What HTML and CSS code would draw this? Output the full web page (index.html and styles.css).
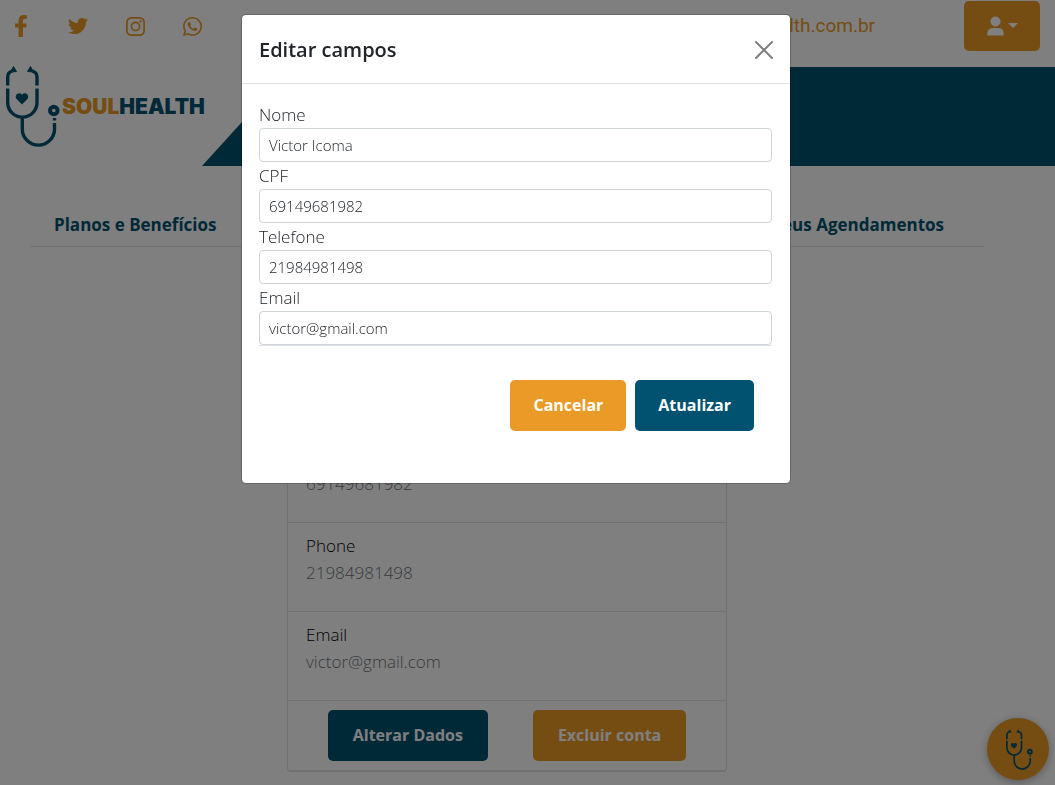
FILE: index.html
```html
<!DOCTYPE html>
<html lang="pt-BR">
<head>
  <meta charset="utf-8">
  <meta name="viewport" content="width=device-width, initial-scale=1">
  <title>Soul Health</title>
  <link rel="stylesheet" href="styles.css">
</head>
<body>
  <svg class="sprite" aria-hidden="true">
    <symbol id="stethoscope" viewBox="0 1 62 90">
      <g fill="none" stroke="currentColor" stroke-width="3.4">
        <path d="M7.7 25.500V17Q7.700 12.500 12 11"/>
        <path d="M37 25.500V17Q37 12.500 32.500 11"/>
        <path d="M7.700 28.500V42.500A14.650 14.650 0 0 0 37 42.500V28.500"/>
        <path d="M22.300 57V69A16.100 16.100 0 0 0 54.500 69V63"/>
        <path d="M54.500 58V60.500"/>
        <circle cx="53.800" cy="50.500" r="3.800" stroke-width="4"/>
      </g>
      <path fill="currentColor" d="M13.500 6.500L16.500 11.500L10.500 12ZM30.500 6.500L33.500 12L27.500 11.500Z" stroke="currentColor" stroke-width="1" stroke-linejoin="round"/>
      <path fill="currentColor" d="M22 44.500L16.800 39.300C13.600 35.800 18.500 30.600 22 34.700C25.500 30.600 30.400 35.800 27.200 39.300Z"/>
    </symbol>
  </svg>

  <header>
    <div class="topbar">
      <nav class="social" aria-label="Redes sociais">
        <a href="#" aria-label="Facebook"><svg width="14" height="22" viewBox="0 0 320 512"><path d="M279.140 288l14.220-92.660h-88.910v-60.130c0-25.350 12.420-50.060 52.240-50.060h40.420V6.260S260.430 0 225.360 0c-73.220 0-121.080 44.380-121.080 124.720v70.620H22.890V288h81.390v224h100.170V288z"/></svg></a>
        <a href="#" aria-label="Twitter"><svg width="20" height="20" viewBox="0 0 512 512"><path d="M459.370 151.716c.325 4.548.325 9.097.325 13.645 0 138.720-105.583 298.558-298.558 298.558-59.452 0-114.680-17.219-161.137-47.106 8.447.974 16.568 1.299 25.340 1.299 49.055 0 94.213-16.568 130.274-44.832-46.132-.975-84.792-31.188-98.112-72.772 6.498.974 12.995 1.624 19.818 1.624 9.421 0 18.843-1.300 27.614-3.573-48.081-9.747-84.143-51.980-84.143-102.985v-1.299c13.969 7.797 30.214 12.670 47.431 13.319-28.264-18.843-46.781-51.005-46.781-87.391 0-19.492 5.197-37.360 14.294-52.954 51.655 63.675 129.300 105.258 216.365 109.807-1.624-7.797-2.599-15.918-2.599-24.040 0-57.828 46.782-104.934 104.934-104.934 30.213 0 57.502 12.670 76.670 33.137 23.715-4.548 46.456-13.320 66.599-25.340-7.798 24.366-24.366 44.833-46.132 57.827 21.117-2.273 41.584-8.122 60.426-16.243-14.292 20.791-32.161 39.308-52.628 54.253z"/></svg></a>
        <a href="#" aria-label="Instagram"><svg width="19" height="19" viewBox="0 0 16 16"><g fill="none" stroke="currentColor" stroke-width="1.450"><rect x=".75" y=".75" width="14.500" height="14.500" rx="3.800"/><circle cx="8" cy="8" r="3.400"/></g><circle cx="12.300" cy="3.700" r="1"/></svg></a>
        <a href="#" aria-label="WhatsApp"><svg width="19" height="19" viewBox="0 32 448 448"><path d="M380.900 97.100C339 55.100 283.200 32 223.900 32c-122.400 0-222 99.600-222 222 0 39.100 10.200 77.300 29.600 111L0 480l117.700-30.900c32.400 17.700 68.900 27 106.100 27h.1c122.300 0 224.100-99.600 224.100-222 0-59.300-25.200-115-67.100-157zm-157 341.600c-33.200 0-65.700-8.900-94-25.700l-6.700-4-69.800 18.300L72 359.200l-4.400-7c-18.500-29.400-28.200-63.300-28.200-98.200 0-101.700 82.800-184.500 184.600-184.500 49.300 0 95.600 19.200 130.400 54.100 34.800 34.900 56.200 81.200 56.100 130.500 0 101.800-84.900 184.600-186.600 184.600zm101.200-138.200c-5.500-2.800-32.800-16.200-37.900-18-5.100-1.900-8.800-2.800-12.500 2.800-3.700 5.600-14.300 18-17.600 21.800-3.200 3.700-6.500 4.200-12 1.400-32.600-16.300-54-29.100-75.500-66-5.700-9.800 5.700-9.100 16.300-30.300 1.800-3.700.9-6.900-.5-9.700-1.400-2.800-12.500-30.100-17.100-41.200-4.500-10.800-9.100-9.300-12.500-9.500-3.200-.2-6.900-.2-10.600-.2-3.700 0-9.700 1.400-14.800 6.900-5.100 5.600-19.400 19-19.400 46.300 0 27.300 19.900 53.700 22.600 57.400 2.800 3.700 39.100 59.700 94.800 83.800 35.200 15.200 49 16.500 66.600 13.900 10.700-1.600 32.800-13.400 37.400-26.400 4.600-13 4.600-24.100 3.200-26.400-1.300-2.500-5-3.900-10.500-6.600z"/></svg></a>
      </nav>
      <a class="contact" href="mailto:contato@soulhealth.com.br">contato@soulhealth.com.br</a>
      <button class="user-menu" type="button" aria-label="Minha conta">
        <svg width="17" height="20" viewBox="0 0 17 20"><circle cx="8.500" cy="5.500" r="5"/><path d="M.3 19.500V17.500Q.5 12 6 12H11Q16.500 12 16.700 17.500V19.500Z"/></svg>
        <span class="caret"></span>
      </button>
    </div>
    <div class="brand-row">
      <a class="brand" href="#" aria-label="Soul Health">
        <svg class="brand-icon" width="62" height="90"><use href="#stethoscope"/></svg>
        <span class="brand-name"><span class="brand-soul">SOUL</span>HEALTH</span>
      </a>
      <div class="band"></div>
    </div>
  </header>

  <main>
    <nav class="tabs" aria-label="Seções">
      <a href="#">Planos e Benefícios</a>
      <a href="#">Meus Agendamentos</a>
    </nav>
    <section class="card">
      <dl class="profile">
        <div class="profile-row"><dt>Name</dt><dd>Victor Icoma</dd></div>
        <div class="profile-row"><dt>CPF</dt><dd>69149681982</dd></div>
        <div class="profile-row"><dt>Phone</dt><dd>21984981498</dd></div>
        <div class="profile-row"><dt>Email</dt><dd>victor@gmail.com</dd></div>
      </dl>
      <div class="card-actions">
        <button class="btn btn-blue" type="button">Alterar Dados</button>
        <button class="btn btn-orange" type="button">Excluir conta</button>
      </div>
    </section>
  </main>

  <button class="chat" type="button" aria-label="Atendimento">
    <svg width="31" height="45"><use href="#stethoscope"/></svg>
  </button>

  <div class="overlay">
    <div class="modal" role="dialog" aria-modal="true" aria-labelledby="modal-title">
      <div class="modal-header">
        <h2 id="modal-title">Editar campos</h2>
        <button class="close" type="button" aria-label="Fechar">
          <svg width="20" height="20" viewBox="0 0 20 20"><path d="M2 2L18 18M18 2L2 18"/></svg>
        </button>
      </div>
      <form class="modal-body">
        <div class="fields">
          <label for="nome">Nome</label>
          <input id="nome" type="text" value="Victor Icoma">
          <label for="cpf">CPF</label>
          <input id="cpf" type="text" value="69149681982">
          <label for="telefone">Telefone</label>
          <input id="telefone" type="tel" value="21984981498">
          <label for="email">Email</label>
          <input id="email" type="email" value="victor@gmail.com">
        </div>
        <div class="modal-actions">
          <button class="btn btn-orange" type="button">Cancelar</button>
          <button class="btn btn-blue" type="submit">Atualizar</button>
        </div>
      </form>
    </div>
  </div>
</body>
</html>
```

FILE: styles.css
```css
:root {
  --orange: #ea9a27;
  --blue: #005270;
  --line: #dee2e6;
  --ink: #212529;
}

* {
  box-sizing: border-box;
}

body {
  margin: 0;
  background: #fff;
  color: var(--ink);
  font-family: "Open Sans", "Noto Sans", sans-serif;
  font-size: 17px;
  font-weight: 300;
  line-height: 27px;
}

button,
input {
  font: inherit;
}

a {
  color: inherit;
  text-decoration: none;
}

.sprite {
  display: none;
}

.topbar {
  display: flex;
  align-items: flex-start;
  padding: 1px 15px 16px 9px;
  color: var(--orange);
}

.social {
  display: flex;
  gap: 33px;
  margin-right: auto;
}

.social a {
  display: flex;
  align-items: center;
  justify-content: center;
  width: 24px;
  height: 50px;
}

.social svg {
  fill: currentColor;
}

.contact {
  margin-right: 89px;
  font-family: Roboto, sans-serif;
  font-size: 19px;
  font-weight: 400;
  line-height: 50px;
}

.user-menu {
  display: flex;
  align-items: center;
  justify-content: center;
  gap: 4px;
  width: 76px;
  height: 50px;
  padding: 0;
  border: 0;
  border-radius: 5px;
  background: var(--orange);
  color: #fff;
}

.user-menu svg {
  fill: currentColor;
}

.caret {
  margin-bottom: 2px;
  border: 5px solid transparent;
  border-top-color: currentColor;
  border-bottom: 0;
}

.brand-row {
  display: flex;
  height: 99px;
}

.brand {
  display: flex;
  align-items: center;
  flex: 0 0 202px;
  min-width: 0;
  max-width: 202px;
  height: 78px;
  color: var(--blue);
}

.brand-icon {
  flex: none;
}

.brand-name {
  font-family: Inter, sans-serif;
  font-size: 21px;
  font-weight: 900;
}

.brand-soul {
  color: var(--orange);
}

.band {
  flex: 1;
  background: var(--blue);
  clip-path: polygon(90px 0, 100% 0, 100% 100%, 0 100%);
}

main {
  padding: 38px 71px 14px 30px;
}

.tabs {
  display: flex;
  justify-content: space-between;
  padding: 7px 40px 8px 24px;
  border-bottom: 1px solid var(--line);
  color: var(--blue);
  font-weight: 700;
}

.card {
  max-width: 440px;
  margin: 97px auto 0;
  border: 1px solid var(--line);
  border-bottom-width: 2px;
  border-radius: 4px;
}

.profile {
  margin: 0;
}

.profile-row {
  height: 89px;
  padding: 9px 18px 0;
  border-bottom: 1px solid var(--line);
}

.profile-row dt {
  color: #000;
}

.profile-row dd {
  margin: 0;
  color: #6c757d;
}

.card-actions {
  display: flex;
  justify-content: center;
  gap: 45px;
  padding: 9px 0;
}

.btn {
  height: 51px;
  padding: 0 23px;
  border: 0;
  border-radius: 5px;
  color: #fff;
  font-size: 16px;
  font-weight: 700;
}

.card-actions .btn {
  padding: 0 25px;
}

.btn-blue {
  background: var(--blue);
}

.btn-orange {
  background: var(--orange);
}

.chat {
  position: fixed;
  right: 6px;
  bottom: 5px;
  display: flex;
  align-items: center;
  justify-content: center;
  width: 62px;
  height: 62px;
  padding: 0;
  border: 0;
  border-radius: 50%;
  background: var(--orange);
  box-shadow: 0 2px 8px rgba(0, 0, 0, 0.3);
  color: var(--blue);
}

.overlay {
  position: fixed;
  inset: 0;
  padding: 14px 23px 14px 0;
  background: rgba(0, 0, 0, 0.5);
}

.modal {
  max-width: 550px;
  margin: 0 auto;
  border: 1px solid rgba(0, 0, 0, 0.2);
  border-radius: 5px;
  background: #fff;
  background-clip: padding-box;
}

.modal-header {
  display: flex;
  align-items: center;
  justify-content: space-between;
  padding: 21px 16px 19px 17px;
  border-bottom: 1px solid var(--line);
}

.modal-header h2 {
  margin: 0;
  font-size: 20px;
  font-weight: 600;
  line-height: 28px;
}

.close {
  display: flex;
  padding: 0;
  border: 0;
  background: none;
  color: #808080;
}

.close svg {
  fill: none;
  stroke: currentColor;
  stroke-width: 2;
  stroke-linecap: round;
}

.modal-body {
  padding: 17px 18px 52px 17px;
}

.fields {
  display: flex;
  flex-direction: column;
  border-bottom: 1px solid var(--line);
}

.fields input {
  width: 100%;
  height: 34px;
  padding: 0 9px;
  border: 1px solid #ced4da;
  border-radius: 4px;
  background: #fff;
  color: var(--ink);
  font-size: 15px;
}

.modal-actions {
  display: flex;
  justify-content: flex-end;
  gap: 9px;
  padding: 34px 18px 0 0;
}
```
